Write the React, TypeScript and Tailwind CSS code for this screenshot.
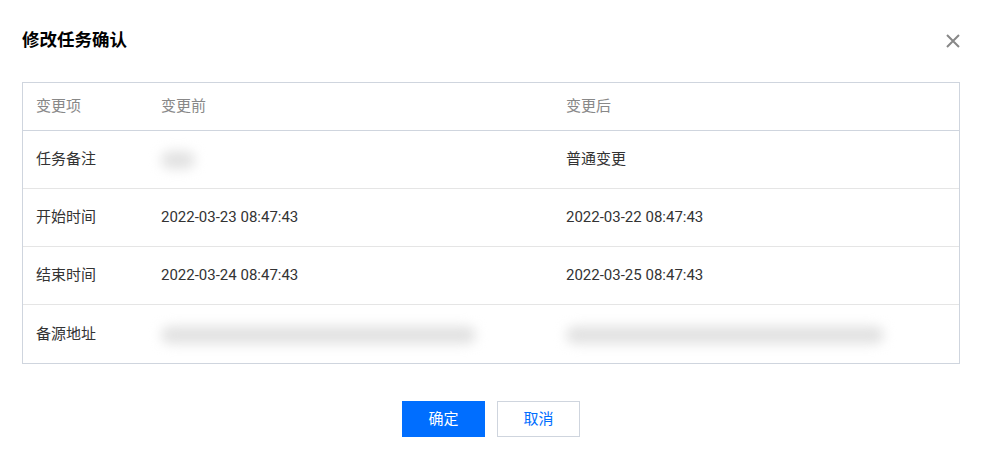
import React from 'react';

const font = { fontFamily: 'Roboto, "Noto Sans CJK SC", sans-serif' };

const Blur = ({ w }: { w: number }) => (
  <span className="inline-block h-[18px] rounded-full bg-[#e2e2e2] blur-[6px] align-middle" style={{ width: w }} />
);

const rows: { label: string; before: React.ReactNode; after: React.ReactNode }[] = [
  { label: '任务备注', before: <Blur w={34} />, after: '普通变更' },
  { label: '开始时间', before: '2022-03-23 08:47:43', after: '2022-03-22 08:47:43' },
  { label: '结束时间', before: '2022-03-24 08:47:43', after: '2022-03-25 08:47:43' },
  { label: '备源地址', before: <Blur w={315} />, after: <Blur w={318} /> },
];

export default function App() {
  return (
    <div className="w-[985px] h-[457px] bg-white overflow-hidden" style={font}>
      <div className="flex items-center justify-between pl-[22px] pr-[24px] pt-[27px]">
        <h1 className="text-[17.5px] font-bold text-black leading-[26px]">修改任务确认</h1>
        <svg width="16" height="16" viewBox="0 0 16 16" className="mt-[2px]">
          <path d="M2 2L14 14M14 2L2 14" stroke="#888" strokeWidth="2" />
        </svg>
      </div>

      <div className="mx-[22px] mt-[29px] w-[938px] border border-[#cfd5de]">
        <div className="grid grid-cols-[125px_405px_1fr] h-[48px] items-center border-b border-[#cfd5de] text-[15px] text-[#888]">
          <div className="pl-[13px]">变更项</div>
          <div className="pl-[13px]">变更前</div>
          <div className="pl-[13px]">变更后</div>
        </div>
        {rows.map((r, i) => (
          <div
            key={r.label}
            className={`grid grid-cols-[125px_405px_1fr] h-[58px] items-center text-[15px] text-[#333] ${i < rows.length - 1 ? 'border-b border-[#e5e5e5]' : ''}`}
          >
            <div className="pl-[13px]">{r.label}</div>
            <div className="pl-[13px]">{r.before}</div>
            <div className="pl-[13px]">{r.after}</div>
          </div>
        ))}
      </div>

      <div className="flex justify-center gap-[12px] mt-[37px] pr-[3px]">
        <button className="w-[83px] h-[36px] bg-[#006eff] text-white text-[15px]">确定</button>
        <button className="w-[83px] h-[36px] border border-[#cfd5de] text-[#006eff] text-[15px] bg-white">取消</button>
      </div>
    </div>
  );
}
